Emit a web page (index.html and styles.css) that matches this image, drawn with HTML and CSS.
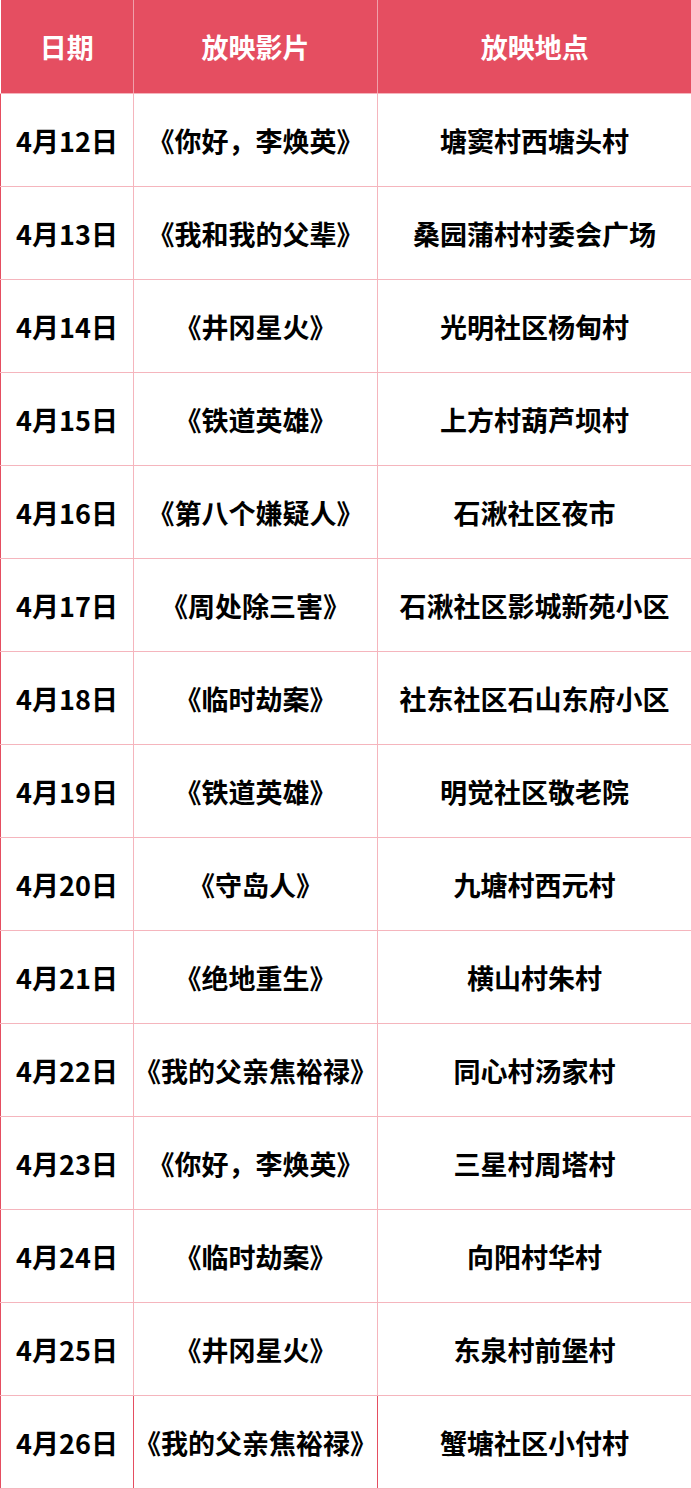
FILE: index.html
```html
<!DOCTYPE html>
<html lang="zh">
<head>
<meta charset="utf-8">
<link rel="stylesheet" href="styles.css">
</head>
<body>
<table class="schedule">
  <colgroup>
    <col class="c-date">
    <col class="c-film">
    <col class="c-place">
  </colgroup>
  <thead>
    <tr><th>日期</th><th>放映影片</th><th>放映地点</th></tr>
  </thead>
  <tbody>
    <tr><td>4月12日</td><td>《你好，李焕英》</td><td>塘窦村西塘头村</td></tr>
    <tr><td>4月13日</td><td>《我和我的父辈》</td><td>桑园蒲村村委会广场</td></tr>
    <tr><td>4月14日</td><td>《井冈星火》</td><td>光明社区杨甸村</td></tr>
    <tr><td>4月15日</td><td>《铁道英雄》</td><td>上方村葫芦坝村</td></tr>
    <tr><td>4月16日</td><td>《第八个嫌疑人》</td><td>石湫社区夜市</td></tr>
    <tr><td>4月17日</td><td>《周处除三害》</td><td>石湫社区影城新苑小区</td></tr>
    <tr><td>4月18日</td><td>《临时劫案》</td><td>社东社区石山东府小区</td></tr>
    <tr><td>4月19日</td><td>《铁道英雄》</td><td>明觉社区敬老院</td></tr>
    <tr><td>4月20日</td><td>《守岛人》</td><td>九塘村西元村</td></tr>
    <tr><td>4月21日</td><td>《绝地重生》</td><td>横山村朱村</td></tr>
    <tr><td>4月22日</td><td>《我的父亲焦裕禄》</td><td>同心村汤家村</td></tr>
    <tr><td>4月23日</td><td>《你好，李焕英》</td><td>三星村周塔村</td></tr>
    <tr><td>4月24日</td><td>《临时劫案》</td><td>向阳村华村</td></tr>
    <tr><td>4月25日</td><td>《井冈星火》</td><td>东泉村前堡村</td></tr>
    <tr class="last"><td>4月26日</td><td>《我的父亲焦裕禄》</td><td>蟹塘社区小付村</td></tr>
  </tbody>
</table>
</body>
</html>
```

FILE: styles.css
```css
html, body {
  margin: 0;
  padding: 0;
  background: #ffffff;
}
body {
  font-family: "Noto Sans CJK SC", "Noto Sans", sans-serif;
}
.schedule {
  width: 691px;
  border-collapse: collapse;
  table-layout: fixed;
}
.c-date { width: 133px; }
.c-film { width: 244px; }
.c-place { width: 314px; }
.schedule th {
  background: #e54e61;
  color: #ffffff;
  font-weight: 700;
  font-size: 27px;
  height: 93px;
  padding: 0;
  text-align: center;
  vertical-align: middle;
  border-right: 1px solid #f0a0aa;
  border-bottom: 1px solid #f5b5bd;
}
.schedule th:last-child { border-right: none; }
.schedule td {
  color: #000000;
  font-weight: 700;
  font-size: 27px;
  height: 92px;
  padding: 0;
  text-align: center;
  vertical-align: middle;
  white-space: nowrap;
  border: 1px solid #f5b5bd;
}
.schedule td:first-child { border-left: 1px solid #e54e61; }
.schedule tr.last td { border-right: 1px solid #e54e61; }
.schedule tr.last td:last-child { border-right: 1px solid #f5b5bd; }
```
